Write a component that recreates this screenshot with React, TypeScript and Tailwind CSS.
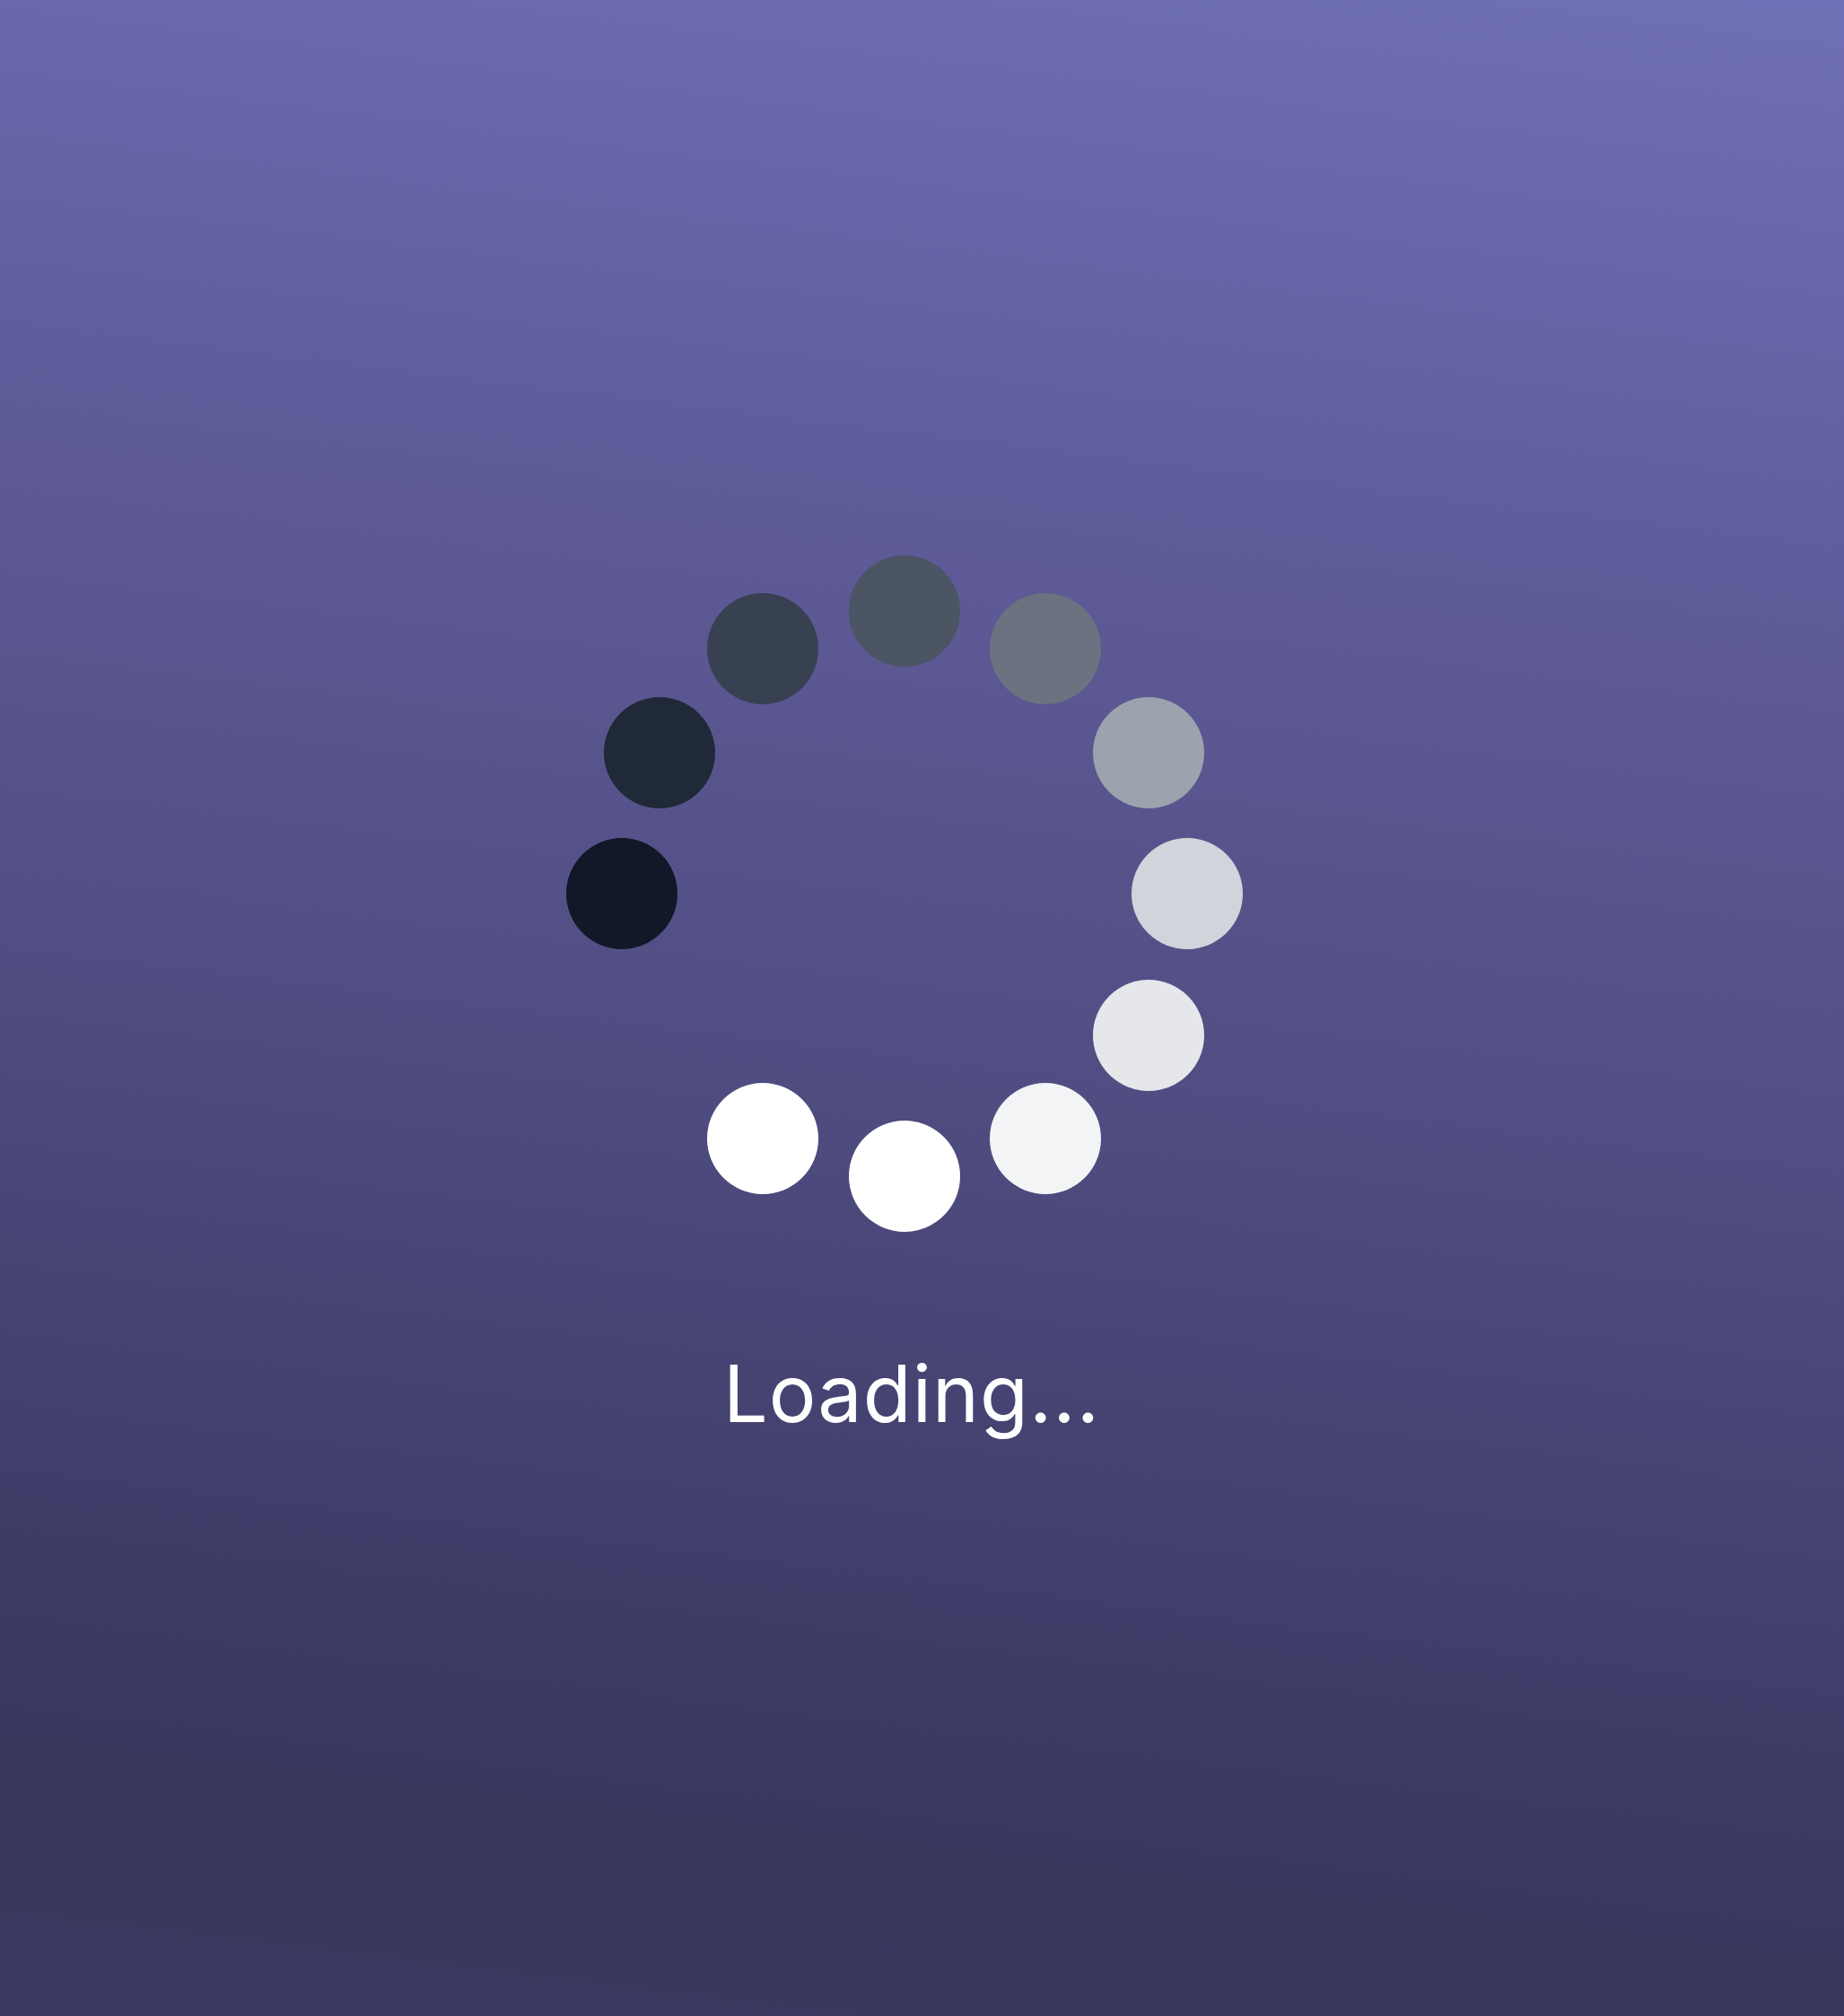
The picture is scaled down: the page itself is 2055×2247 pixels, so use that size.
import React from "react";

const dots: { cls: string; visible: boolean }[] = [
  { cls: "bg-[#4b5563]", visible: true },
  { cls: "bg-[#6b7280]", visible: true },
  { cls: "bg-[#9ca3af]", visible: true },
  { cls: "bg-[#d1d5db]", visible: true },
  { cls: "bg-[#e5e7eb]", visible: true },
  { cls: "bg-[#f3f4f6]", visible: true },
  { cls: "bg-white", visible: true },
  { cls: "bg-white", visible: true },
  { cls: "bg-white", visible: false },
  { cls: "bg-[#111827]", visible: true },
  { cls: "bg-[#1f2937]", visible: true },
  { cls: "bg-[#374151]", visible: true },
];

const R = 315;
const D = 124;
const C = R + D / 2;

export default function App() {
  return (
    <div className="min-h-[2247px] w-full flex flex-col items-center bg-[linear-gradient(187deg,#7070b6_0%,#605d9c_25%,#524f85_50%,#403e6a_75%,#37365c_90%,#3b3a62_100%)]">
      <div className="relative mt-[619px] mr-[40px] w-[754px] h-[754px]">
        {dots.map((d, i) => {
          if (!d.visible) return null;
          const a = (i * Math.PI) / 6;
          const x = C + R * Math.sin(a) - D / 2;
          const y = C - R * Math.cos(a) - D / 2;
          return (
            <div
              key={i}
              className={`absolute w-[124px] h-[124px] rounded-full ${d.cls}`}
              style={{ left: x, top: y }}
            />
          );
        })}
      </div>
      <div className="mt-[136px] mr-[23px] text-white text-[88px] tracking-[1px] leading-none font-normal font-['Inter',sans-serif]">
        Loading...
      </div>
    </div>
  );
}
